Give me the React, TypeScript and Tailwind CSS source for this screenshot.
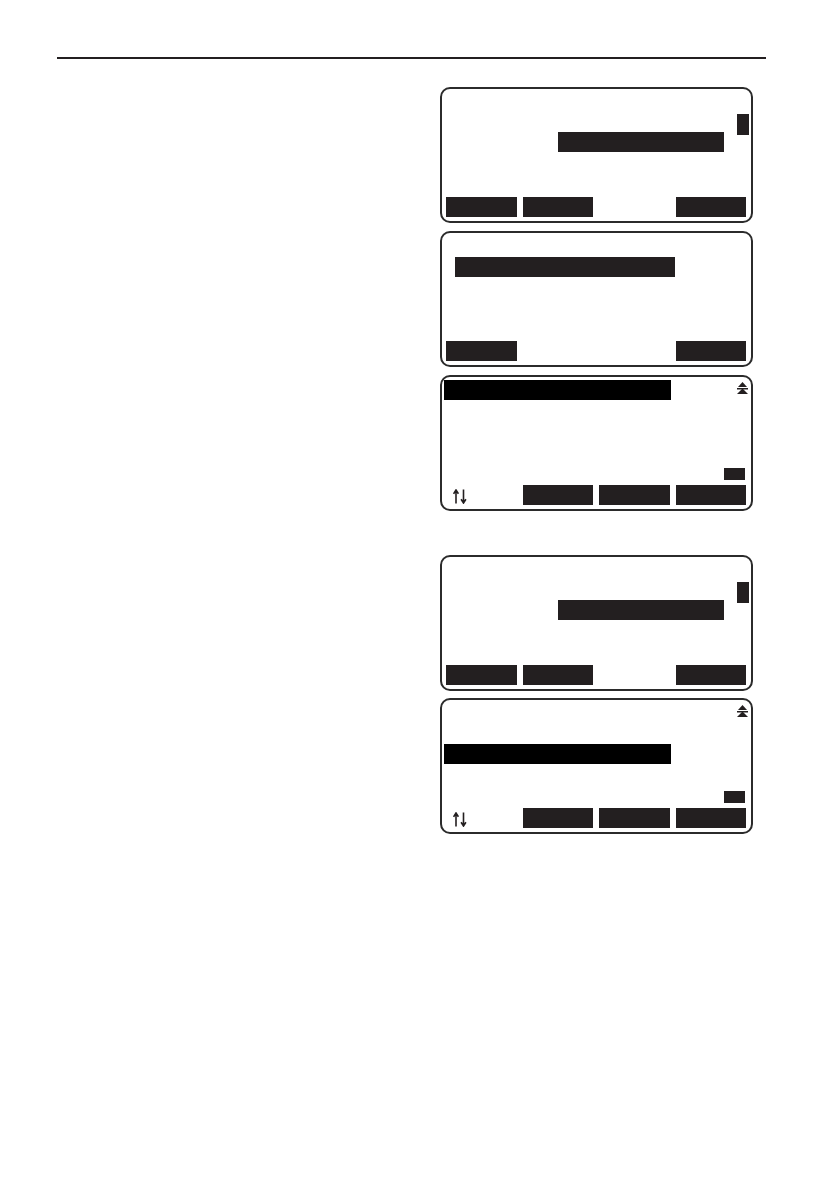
import type { ReactNode } from 'react';

// LCD soft key bar: four slots, empty slots render as blank space
function Keys({ slots, first }: { slots: boolean[]; first?: ReactNode }) {
  return (
    <div className="mt-auto mb-[4px] ml-[4px] grid w-[300px] grid-cols-4 gap-[6px]">
      {slots.map((on, i) => (
        <div key={i} className={`h-[20px] ${on ? 'bg-[#231f20]' : ''} flex items-center`}>
          {i === 0 && first}
        </div>
      ))}
    </div>
  );
}

function DoubleUp() {
  return (
    <svg width="11" height="12" viewBox="0 0 11 12" className="block">
      <polygon points="5.5,0 10,5 1,5" fill="#231f20" />
      <rect x="0" y="6" width="11" height="1.5" fill="#231f20" />
      <polygon points="5.5,6.5 11,12 0,12" fill="#231f20" />
    </svg>
  );
}

function UpDown() {
  return (
    <svg width="14" height="15" viewBox="0 0 14 15" className="mt-[3px] ml-[7px] block">
      <path
        d="M3 14.5V1.5M0.6 4.8L3 1L5.4 4.8M10.5 0.5V13.5M8.1 10.2L10.5 14L12.9 10.2"
        fill="none"
        stroke="#231f20"
        strokeWidth="1.6"
      />
    </svg>
  );
}

function Screen({ children }: { children: ReactNode }) {
  return (
    <div className="flex h-[136px] w-[313px] flex-col rounded-[10px] border-2 border-[#2b2b2b] bg-white">
      {children}
    </div>
  );
}

function EditScreen() {
  return (
    <Screen>
      <div className="mt-[25px] flex items-start">
        <div className="mt-[18px] ml-[116px] h-[20px] w-[166px] bg-[#231f20]" />
        <div className="mr-[2px] ml-auto h-[21px] w-[12px] bg-[#231f20]" />
      </div>
      <Keys slots={[true, true, false, true]} />
    </Screen>
  );
}

function ConfirmScreen() {
  return (
    <Screen>
      <div className="mt-[24px] ml-[13px] h-[20px] w-[220px] bg-[#231f20]" />
      <Keys slots={[true, false, false, true]} />
    </Screen>
  );
}

function ListScreen({ row }: { row: 0 | 2 }) {
  return (
    <Screen>
      <div className="mt-[3px] flex items-start">
        {row === 0 ? (
          <div className="ml-[2px] h-[20px] w-[227px] bg-black" />
        ) : (
          <div className="h-[20px]" />
        )}
        <div className="mt-[2px] mr-[3px] ml-auto">
          <DoubleUp />
        </div>
      </div>
      {row === 2 && <div className="mt-[21px] ml-[2px] h-[20px] w-[227px] bg-black" />}
      <div className="mt-auto flex flex-col">
        <div className="mr-[6px] mb-[5px] h-[12px] w-[21px] self-end bg-[#231f20]" />
        <Keys slots={[false, true, true, true]} first={<UpDown />} />
      </div>
    </Screen>
  );
}

export default function App() {
  return (
    <div className="min-h-[1186px] w-[840px] bg-white [font-family:'Liberation_Sans',sans-serif]">
      <div className="pt-[57px] pl-[57px]">
        <div className="h-[2px] w-[709px] bg-[#231f20]" />
      </div>
      <div className="mt-[28px] ml-[440px] flex w-[313px] flex-col gap-[8px]">
        <EditScreen />
        <ConfirmScreen />
        <ListScreen row={0} />
      </div>
      <div className="mt-[44px] ml-[440px] flex w-[313px] flex-col gap-[7px]">
        <EditScreen />
        <ListScreen row={2} />
      </div>
    </div>
  );
}
